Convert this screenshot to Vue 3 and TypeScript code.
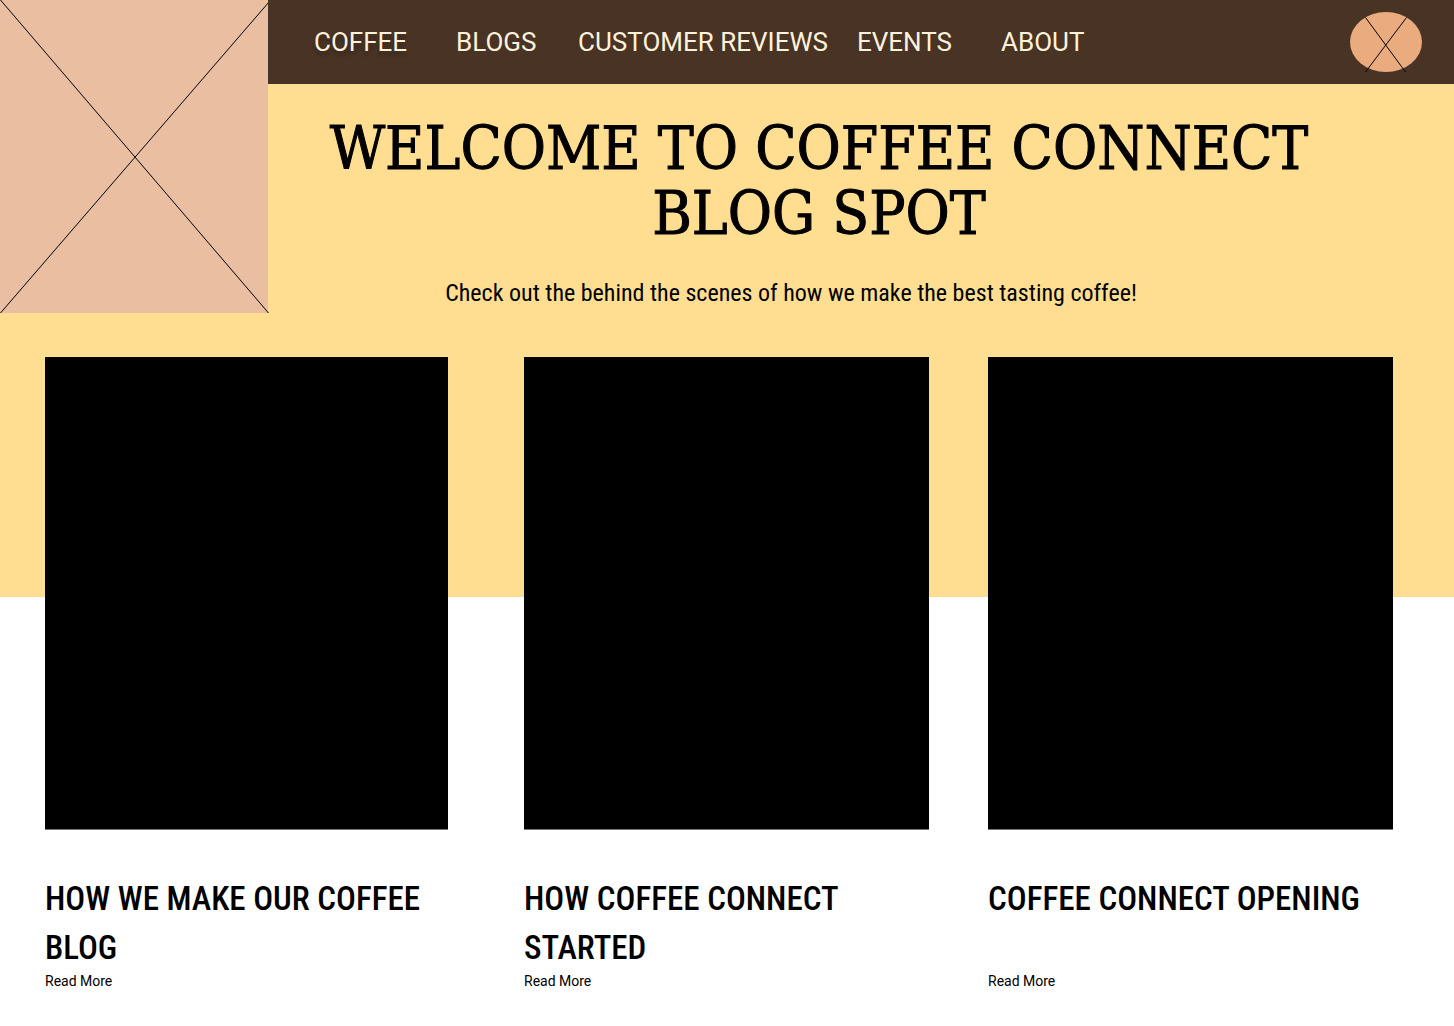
<script setup lang="ts">
interface NavLink {
  label: string
  href: string
  raised?: boolean
}

interface Post {
  title: string
  href: string
}

const links: NavLink[] = [
  { label: 'COFFEE', href: '#coffee', raised: true },
  { label: 'BLOGS', href: '#blogs' },
  { label: 'CUSTOMER REVIEWS', href: '#reviews' },
  { label: 'EVENTS', href: '#events' },
  { label: 'ABOUT', href: '#about' },
]

const posts: Post[] = [
  { title: 'HOW WE MAKE OUR COFFEE BLOG', href: '#how-we-make' },
  { title: 'HOW COFFEE CONNECT STARTED', href: '#how-we-started' },
  { title: 'COFFEE CONNECT OPENING', href: '#opening' },
]
</script>

<template>
  <div class="page">
    <div class="top">
      <svg class="logo" viewBox="0 0 268 313" role="img" aria-label="Logo">
        <rect width="268" height="313" fill="#e9bea1" />
        <path d="M0.5 0L268.5 313M269 2L0.5 313" stroke="#000" fill="none" />
      </svg>
      <header class="bar">
        <nav class="nav">
          <a
            v-for="link in links"
            :key="link.label"
            :href="link.href"
            :class="{ raised: link.raised }"
          >{{ link.label }}</a>
        </nav>
        <svg class="avatar" viewBox="0 0 72 61" role="img" aria-label="Profile">
          <ellipse cx="36" cy="30" rx="36" ry="30" fill="#eaab7f" />
          <path d="M15.500 5.500L55.500 60M56.500 5.500L15.500 60" stroke="#000" fill="none" />
        </svg>
      </header>
      <div class="intro">
        <h1>WELCOME TO COFFEE CONNECT<br>BLOG SPOT</h1>
        <p>Check out the behind the scenes of how we make the best tasting coffee!</p>
      </div>
    </div>
    <main class="posts">
      <article v-for="post in posts" :key="post.title">
        <div class="picture"></div>
        <h2>{{ post.title }}</h2>
        <a :href="post.href">Read More</a>
      </article>
    </main>
  </div>
</template>

<style>
body {
  margin: 0;
  background: #fff;
}
</style>

<style scoped>
.page {
  font-family: Roboto, sans-serif;
  color: #000;
}
.top {
  display: grid;
  grid-template-columns: 268px 1fr;
  grid-template-rows: 84px auto;
  min-height: 597px;
  background: #ffde91;
}
.logo {
  grid-row: 1 / 3;
  width: 268px;
  height: 313px;
  overflow: visible;
}
.bar {
  display: flex;
  align-items: center;
  justify-content: space-between;
  padding: 0 32px 0 46px;
  background: #483324;
}
.nav {
  display: grid;
  grid-template-columns: 142px 122px 279px 144px auto;
}
.nav a {
  font-size: 26px;
  line-height: 30px;
  color: #fff2dc;
  text-decoration: none;
  white-space: nowrap;
}
.nav .raised {
  text-shadow: 0 4px 4px rgba(0, 0, 0, 0.25);
}
.avatar {
  width: 72px;
  height: 61px;
  overflow: visible;
}
.intro {
  padding: 32px 84px 0 0;
  text-align: center;
}
h1 {
  margin: 0;
  font-family: "DejaVu Serif Condensed", "DejaVu Serif", serif;
  font-size: 60px;
  font-weight: 400;
  line-height: 65px;
  white-space: nowrap;
  -webkit-text-stroke: 1px #000;
}
.intro p {
  margin: 31px 56px 0 0;
  font-family: "Roboto Condensed", Roboto, sans-serif;
  font-size: 24px;
  font-weight: 400;
  line-height: 32px;
}
.posts {
  display: grid;
  grid-template-columns: 403fr 76fr 405fr 59fr 405fr;
  margin-top: -240px;
  padding: 0 61px 35px 45px;
}
article {
  display: flex;
  flex-direction: column;
  align-items: flex-start;
}
article:nth-child(2) {
  grid-column: 3;
}
article:nth-child(3) {
  grid-column: 5;
}
.picture {
  align-self: stretch;
  height: 472px;
  background: #000;
  border-bottom: 1px solid #777;
}
h2 {
  min-height: 98px;
  margin: 44px 0 0;
  font-family: "Roboto Condensed", Roboto, sans-serif;
  font-size: 33px;
  font-weight: 500;
  line-height: 49px;
}
article a {
  font-size: 14px;
  line-height: 18px;
  color: #000;
  text-decoration: none;
}
</style>
